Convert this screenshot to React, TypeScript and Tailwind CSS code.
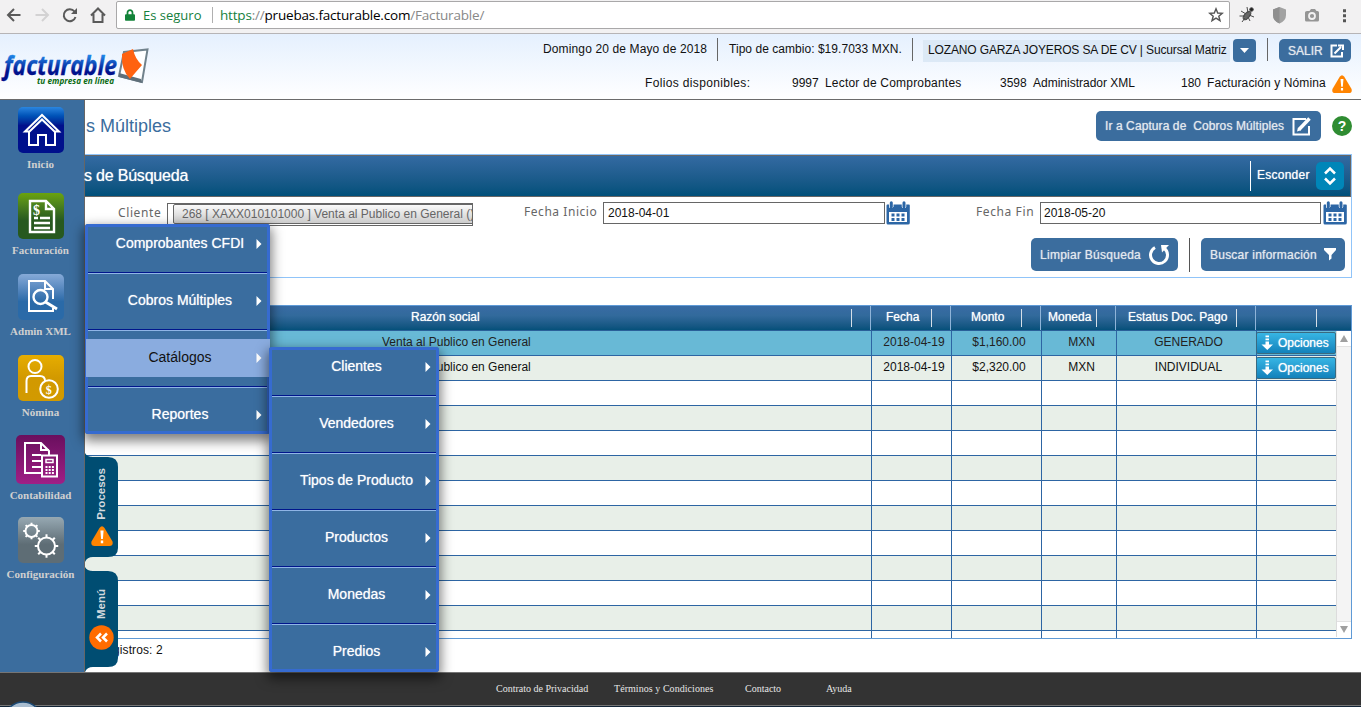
import React from "react";
import { FaLock } from "react-icons/fa";

const ARIAL = "font-['Liberation_Sans',Arial,sans-serif]";

function Arrow() {
  return (
    <svg width="6" height="12" viewBox="0 0 6 12">
      <path d="M0.5 1 L5.5 6 L0.5 11 Z" fill="#fff" />
    </svg>
  );
}

function Menu({ items, active, className }: { items: string[]; active?: string; className: string }) {
  return (
    <div className={"absolute z-20 rounded-[3px] bg-[#3a6d9f] pt-px text-[14px] shadow-[0_5px_12px_2px_rgba(0,0,0,0.5)] " + className}>
      <div className="pointer-events-none absolute inset-0 rounded-[3px] border-[3px] border-[#366bd0]" />
      {items.map((t, i) => (
        <div key={t} className="relative">
          {i > 0 && <div className="mx-[3px] mt-[9px] mb-2 h-[2px] border-b border-[#8fb5e6] bg-[#00168c]" />}
          <div
            className={
              "flex h-[38px] items-center " +
              (t === active
                ? "ml-px bg-[#8aacdf] pl-[18px] pr-[8px] text-[#111]"
                : "pl-[19px] pr-[8px] text-white [text-shadow:0_0_1px_rgba(255,255,255,0.7)]")
            }
          >
            <span className="grow pb-[2px] text-center leading-4">{t}</span>
            <Arrow />
          </div>
        </div>
      ))}
    </div>
  );
}

const side = [
  { label: "Inicio", tile: "h-[46px] w-[46px] from-[#2a86e0] via-[#00108c] via-40% to-[#00108c]", pos: "pt-[7px] h-[93px]" },
  { label: "Facturación", tile: "h-[46px] w-[46px] from-[#6aa30c] via-[#27591f] via-60% to-[#27591f]", pos: "h-[81px]" },
  { label: "Admin XML", tile: "h-[46px] w-[46px] from-[#86aad8] via-[#2a6aa8] via-60% to-[#2a6aa8]", pos: "h-[81px]" },
  { label: "Nómina", tile: "h-[46px] w-[46px] from-[#e6ad00] via-[#d29900] via-50% to-[#d29a00]", pos: "h-[80px]" },
  { label: "Contabilidad", tile: "h-[49px] w-[49px] -ml-px from-[#6a0f5e] to-[#a01f86]", pos: "h-[82px]" },
  { label: "Configuración", tile: "h-[46px] w-[46px] from-[#97a9b3] via-[#5e6d75] via-60% to-[#5e6d75]", pos: "h-[80px]" },
];

function Gear({ x, y, r }: { x: number; y: number; r: number }) {
  return (
    <g transform={`translate(${x} ${y})`}>
      <circle r={r} />
      {[0, 45, 90, 135, 180, 225, 270, 315].map((a) => (
        <line key={a} x1={r} x2={r + r * 0.38} y1="0" y2="0" transform={`rotate(${a})`} />
      ))}
    </g>
  );
}

function SideIcon({ name }: { name: string }) {
  return (
    <svg width="46" height="46" viewBox="0 0 46 46" fill="none" stroke="#fff" strokeWidth="2">
      {name === "Inicio" && <path d="M11 24 V38 H20 V28 H28 V38 H37 V24 M7 24.5 L24 8 L41 24.5 H36.500 L24 12.500 L11.500 24.5 Z" />}
      {name === "Facturación" && (
        <g>
          <path d="M12 8 H28 L36 16 V39 H12 Z M28 8 V16 H36" strokeWidth="2.400" />
          <path d="M16 25 H20 M22 25 H32 M16 30 H32 M16 35 H32" strokeWidth="2.400" />
          <text x="15" y="22" fill="#fff" stroke="none" fontSize="14" fontWeight="bold" fontFamily="Liberation Serif">$</text>
        </g>
      )}
      {name === "Admin XML" && (
        <g>
          <path d="M35 25 V15 L27 7 H11 V37 H35 V34 M27 7 V15 H35" />
          <circle cx="22.500" cy="23" r="7" strokeWidth="2.400" />
          <path d="M27.500 28 L39 35" strokeWidth="3" />
        </g>
      )}
      {name === "Nómina" && (
        <g>
          <circle cx="17" cy="11.500" r="6.500" />
          <path d="M8.500 38 V26 Q8.500 21 13 21 H22 Q27 21 27 26" />
          <circle cx="31" cy="34" r="8.800" />
          <text x="27.800" y="38.500" fill="#fff" stroke="none" fontSize="12" fontWeight="bold" fontFamily="Liberation Serif">$</text>
        </g>
      )}
      {name === "Contabilidad" && (
        <g>
          <path d="M24 36 H7 V6 H23 L31 14 V18 M23 6 V13 H31 M14 18 H23 M14 24 H23 M14 30 H23" />
          <rect x="24" y="18.500" width="15" height="21" />
          <rect x="28" y="22.500" width="7" height="3" strokeWidth="1.500" />
          <path d="M27.500 30 H36 M27.500 33 H36 M27.500 36 H36" strokeDasharray="2 1.200" />
        </g>
      )}
      {name === "Configuración" && (
        <g>
          <Gear x={13.5} y={14} r={6} />
          <Gear x={28.500} y={29} r={8.500} />
        </g>
      )}
    </svg>
  );
}

function Calendar() {
  return (
    <svg className="-mt-px" width="24" height="24" viewBox="0 0 24 24">
      <path d="M1 3.500 H3.300 V7 H7 V3.500 H16 V7 H20 V3.500 H23 Q23.800 3.500 23.800 4.500 V22 Q23.800 23.500 22 23.500 H2 Q0.500 23.500 0.500 22 V4.500 Z" fill="#2c66a5" />
      <path d="M5.300 0.500 V6 M18 0.500 V6" stroke="#fff" strokeWidth="4.500" />
      <path d="M5.300 1.800 V6 M18 1.800 V6" stroke="#2c66a5" strokeWidth="3" strokeLinecap="round" />
      <rect x="3" y="11" width="18" height="10" fill="#fff" />
      <path d="M5.500 14 H19 M5.500 18.500 H19" stroke="#2c66a5" strokeWidth="2.800" strokeDasharray="3 2" />
    </svg>
  );
}

function Warn({ w, h }: { w: number; h: number }) {
  return (
    <svg width={w} height={h} viewBox="0 0 22 20" preserveAspectRatio="none">
      <path d="M8.500 2 Q11 -1.500 13.500 2 L21.500 15.500 Q22.500 20 18.500 20 H3.500 Q-0.500 20 0.500 15.500 Z" fill="#ff8400" />
      <path d="M9.400 4.500 H12.600 L11.900 13 H10.100 Z M9.800 14.500 H12.200 V17.300 H9.800 Z" fill="#fff" />
    </svg>
  );
}

function Tab({ label, h, className, children }: { label: string; h: number; className: string; children: React.ReactNode }) {
  return (
    <div className={"absolute left-[85px] z-10 w-[33px] " + className}>
      <svg className="absolute inset-0" width="33" height={h}>
        <path d={`M0 0 Q2 4 8 4 H23 Q33 4 33 14 V${h - 14} Q33 ${h - 5} 23 ${h - 5} H8 Q2 ${h - 5} 0 ${h} Z`} fill="#004d72" />
      </svg>
      <div className="relative flex flex-col items-center">
        <span className="mr-[2px] rotate-180 text-[11.500px] leading-4 font-bold text-[#d3d9de] [writing-mode:vertical-rl]">{label}</span>
        {children}
      </div>
    </div>
  );
}

const rows = [
  ["Venta al Publico en General", "2018-04-19", "$1,160.00", "MXN", "GENERADO"],
  ["Venta al Publico en General", "2018-04-19", "$2,320.00", "MXN", "INDIVIDUAL"],
  ...Array.from({ length: 10 }, () => ["", "", "", "", ""]),
];

const heads = ["Razón social", "Fecha", "Monto", "Moneda", "Estatus Doc. Pago", ""];
const headPad = ["pl-[326px]", "pl-[15px]", "pl-[20px]", "pl-[7px]", "pl-[12px]", ""];
const headWidth = ["w-[786px]", "w-[80px]", "w-[90px]", "w-[75px]", "w-[140px]", "w-[80px]"];
const btn = "flex items-center rounded-[5px] bg-[#3b6d9e] text-[12px] text-[#e3e8ee] [text-shadow:0_0_1px_rgba(227,232,238,0.8)]";

export default function App() {
  return (
    <div className={"relative flex h-[707px] w-[1361px] flex-col overflow-hidden bg-white text-[12px] text-[#111] " + ARIAL}>
      {/* browser toolbar */}
      <div className="flex h-[34px] shrink-0 items-start border-b border-[#b6b4b6] bg-[#f2f1f2] font-['Open_Sans','Noto_Sans',sans-serif]">
        <svg width="116" height="30" viewBox="0 0 116 30" fill="none" stroke="#5a5a5a" strokeWidth="2">
          <path d="M20.500 15 H8 M14 9 L8 15 L14 21" />
          <path d="M35.500 15 H48 M42 9 L48 15 L42 21" stroke="#d3d2d3" />
          <path d="M74.500 11.500 A6 6 0 1 0 75.500 17" />
          <path d="M77 8 V14 H71 Z" fill="#5a5a5a" stroke="none" />
          <path d="M91 15.500 L98 8.500 L105 15.500 M93.500 14 V22 H102.500 V14" />
        </svg>
        <div className="mt-px flex h-[28px] w-[1114px] items-center rounded-[2px] border border-[#a9a8a9] bg-white pl-[8px]">
          <FaLock className="h-[12px] w-[10px] text-[#128339]" />
          <span className="ml-[8px] w-[69px] text-[13px] leading-5 whitespace-nowrap text-[#15803d]">Es seguro</span>
          <span className="h-4 w-[8px] border-l border-[#b0b0b0]" />
          <span className="text-[13.500px] leading-5 tracking-[-0.190px] whitespace-nowrap text-[#888]">
            <span className="text-[#15803d]">https</span>://<span className="text-black">pruebas.facturable.com</span>/Facturable/
          </span>
          <svg className="mr-[5px] ml-auto" width="16" height="16" viewBox="0 0 16 16" fill="none" stroke="#555" strokeWidth="1.400">
            <path d="M8 1.800 L9.700 6 L14.300 6.300 L10.800 9.200 L12 13.700 L8 11.200 L4 13.700 L5.200 9.200 L1.700 6.300 L6.300 6 Z" />
          </svg>
        </div>
        <svg width="131" height="30" viewBox="0 0 131 30">
          <g stroke="#4a4a4a" fill="#666">
            <ellipse cx="17" cy="15.500" rx="2.500" ry="5" transform="rotate(40 17 15.500)" />
            <path d="M11 11 L16 14 M9.500 16 L15 16 M12 22 L15 18 M17 7 L18 13 M24 17 L19 15 M20 21 L18 17" fill="none" />
            <circle cx="21.500" cy="9.500" r="1.800" fill="#222" />
          </g>
          <path d="M49.500 7 L56 9.500 V15 Q56 21 49.500 23.500 Q43 21 43 15 V9.500 Z" fill="#a2a2a2" />
          <path d="M49.500 7 V23.500 Q43 21 43 15 V9.500 Z" fill="#8f8f8f" />
          <path d="M77 11 H79.500 L81 9 H85 L86.500 11 H87.500 Q89 11 89 12.500 V20 Q89 21.500 87.500 21.500 H76.500 Q75 21.500 75 20 V12.500 Q75 11 77 11 Z" fill="#959595" />
          <circle cx="82" cy="16" r="3" fill="#959595" stroke="#f2f1f2" strokeWidth="1.800" />
          <path d="M113 9.300 h3 v3 h-3 Z M113 14.300 h3 v3 h-3 Z M113 19.300 h3 v3 h-3 Z" fill="#555" />
        </svg>
      </div>

      {/* site header */}
      <header className="flex h-[66px] shrink-0 border-b border-[#6b6b6b] bg-gradient-to-b from-[#e5f0fe] to-white whitespace-nowrap">
        <svg width="543" height="65" viewBox="0 34 543 65">
          <defs>
            <linearGradient id="lg" x1="0" y1="0" x2="0" y2="1">
              <stop offset="0.250" stopColor="#1f86e8" />
              <stop offset="0.700" stopColor="#00128c" />
            </linearGradient>
          </defs>
          <path d="M124 52 L147.500 49.500 L142 82 L119 76 Z" fill="#fff" stroke="#71828c" strokeWidth="2" />
          <path d="M119 73 L141 79 L142 83 L119 77 Z" fill="#5f6f79" />
          <path d="M122 54 L133 49 Q135 59 142 65 Q135 73 130 79 Q121 70 122 54 Z" fill="#ff6210" />
          <text x="4" y="75" textLength="113" lengthAdjust="spacingAndGlyphs" fontFamily="Open Sans, Noto Sans" fontSize="27" fontWeight="bold" fontStyle="italic" fill="url(#lg)" stroke="url(#lg)" strokeWidth="0.300">facturable</text>
          <text x="37" y="84" textLength="77" lengthAdjust="spacingAndGlyphs" fontFamily="Open Sans, Noto Sans" fontSize="9" fontWeight="bold" fontStyle="italic" fill="#0a6b12">tu empresa en línea</text>
        </svg>
        <div className="flex grow flex-col">
          <div className="flex h-[32px] pt-[4px] leading-[22px]">
            <span className="w-[174px] tracking-[0.130px]">Domingo 20 de Mayo de 2018</span>
            <span className="h-[23px] w-3 border-l border-[#666]" />
            <span className="w-[183px] tracking-[0.040px]">Tipo de cambio: $19.7033 MXN.</span>
            <span className="h-[23px] w-[11px] border-l border-[#666]" />
            <span className="mt-[2px] h-[22px] w-[307px] bg-[#dce9f6] pl-[5px] leading-[20px] tracking-[-0.140px]">LOZANO GARZA JOYEROS SA DE CV | Sucursal Matriz</span>
            <span className="mt-px ml-[3px] flex h-[23px] w-[23px] items-center justify-center rounded-[4px] bg-[#3b6d9e]">
              <svg width="9" height="5"><path d="M0 0 H9 L4.500 5 Z" fill="#fff" /></svg>
            </span>
            <span className="ml-[11px] h-[23px] w-[12px] border-l border-[#666]" />
            <span className={btn + " mt-px h-[23px] w-[72px] gap-[7px] pl-[9px]"}>
              SALIR
              <svg width="14" height="14" viewBox="0 0 14 14" fill="none" stroke="#fff" strokeWidth="2">
                <path d="M7 1.500 H1.500 V12.500 H12 V8 M4.500 9.500 L11 3 M8 1.500 H13 V6" />
              </svg>
            </span>
          </div>
          <div className="flex pt-[5px] leading-[24px]">
            <span className="ml-[102px] w-[147px] tracking-[0.350px]">Folios disponibles:</span>
            <span className="w-[33px]">9997</span>
            <span className="w-[175px] tracking-[0.200px]">Lector de Comprobantes</span>
            <span className="w-[33px]">3598</span>
            <span className="w-[148px]">Administrador XML</span>
            <span className="w-[26px]">180</span>
            <span className="w-[125px] tracking-[0.100px]">Facturación y Nómina</span>
            <span className="mt-[4px]"><Warn w={20} h={18} /></span>
          </div>
        </div>
      </header>

      <div className="flex h-[572px] shrink-0">
        {/* sidebar */}
        <nav className="flex w-[85px] shrink-0 flex-col border-r border-[#666] bg-[#3b6d9e]">
          {side.map((s) => (
            <div key={s.label} className={"flex shrink-0 flex-col items-center pr-[2px] " + s.pos}>
              <div className={"flex shrink-0 items-center justify-center rounded-[5px] bg-gradient-to-b " + s.tile}>
                <SideIcon name={s.label} />
              </div>
              <span className="pt-[3px] pr-px font-['Liberation_Serif',serif] text-[11px] leading-4 font-bold text-[#d0d0d0]">{s.label}</span>
            </div>
          ))}
        </nav>

        {/* content */}
        <main className="flex w-[1276px] flex-col">
          <div className="flex h-[54px] items-start whitespace-nowrap">
            <h1 className="mt-[15px] ml-px text-[18px] leading-[22px] text-[#3b6d9e]">s Múltiples</h1>
            <div className={btn + " mt-[11px] ml-auto h-[30px] w-[225px] pl-[9px]"}>
              <span className="w-[187px] tracking-[0.090px] whitespace-pre">Ir a Captura de  Cobros Múltiples</span>
              <svg width="20" height="20" viewBox="0 0 20 20" fill="none" stroke="#fff" strokeWidth="2">
                <path d="M14 3 H1.500 V18.500 H17 V10" />
                <path d="M7 13.500 L17.500 2.500" strokeWidth="3.500" />
                <path d="M5 15.500 L6 11.500 L9 14.300 Z" fill="#fff" stroke="none" />
              </svg>
            </div>
            <span className="mt-[16px] mr-[9px] ml-[11px] flex h-[20px] w-[20px] items-center justify-center rounded-full bg-[#2f8c32] text-[14px] font-bold text-white">?</span>
          </div>

          <section className="flex h-[124px] w-[1267px] shrink-0 flex-col border-t border-r border-b border-[#90c4f9]">
            <div className="flex h-[42px] items-start border-t border-r border-b border-[#666] bg-gradient-to-b from-[#336aa2] to-[#00507a] text-white">
              <h2 className="mt-[10px] -ml-px text-[16px] leading-5 tracking-[-0.200px] [text-shadow:0_0_1px_rgba(255,255,255,0.700)]">s de Búsqueda</h2>
              <span className="mt-[5px] ml-auto h-[30px] w-[7px] border-l border-white" />
              <span className="mt-[10px] w-[59px] text-[12px] leading-[18px] tracking-[0.250px] [text-shadow:0_0_1px_rgba(255,255,255,0.800)]">Esconder</span>
              <span className="mt-[6px] mr-[6px] flex h-[28px] w-[28px] items-center justify-center rounded-[5px] bg-[#0086b8]">
                <svg width="12" height="20" viewBox="0 0 12 20" fill="none" stroke="#fff" strokeWidth="2.500">
                  <path d="M1 7.500 L6 2.500 L11 7.500 M1 12.500 L6 17.500 L11 12.500" />
                </svg>
              </span>
            </div>
            <div className="flex h-[34px] items-start pt-[5px] pl-[33px] whitespace-nowrap">
              <span className="w-[49px] pt-[3px] font-['Noto_Sans',sans-serif] text-[12px] leading-4 tracking-[0.600px] text-[#666]">Cliente</span>
              <div className="mt-px h-[23px] w-[306px] overflow-hidden border border-[#666] pl-[5px]">
                <div className="h-[20px] w-[310px] rounded-[2px] border border-[#666] bg-gradient-to-b from-[#fafafa] to-[#ccc] pl-[8px] text-[12px] leading-[19px] text-[#666]">
                  268 [ XAXX010101000 ] Venta al Publico en General ()
                </div>
              </div>
              <span className="ml-[51px] w-[79px] pt-[2px] font-['Noto_Sans',sans-serif] text-[12px] leading-4 tracking-[0.550px] text-[#666]">Fecha Inicio</span>
              <div className="h-[22px] w-[282px] border border-[#666] pl-[4px] leading-[20px]">2018-04-01</div>
              <div className="w-[91px] pl-[1px]"><Calendar /></div>
              <span className="w-[64px] pt-[2px] font-['Noto_Sans',sans-serif] text-[12px] leading-4 tracking-[0.600px] text-[#666]">Fecha Fin</span>
              <div className="h-[22px] w-[281px] border border-[#666] pl-[3px] leading-[20px]">2018-05-20</div>
              <div className="pl-[2px]"><Calendar /></div>
            </div>
            <div className="flex justify-end pt-[7px] pr-[6px] whitespace-nowrap">
              <div className={btn + " h-[33px] w-[147px] pl-[9px]"}>
                <span className="w-[108px] tracking-[0.270px]">Limpiar Búsqueda</span>
                <svg width="22" height="22" viewBox="0 0 22 22" fill="none" stroke="#fff" strokeWidth="3">
                  <path d="M7 3.500 A8.500 8.500 0 1 0 16.500 4.500" />
                  <path d="M13 1 H21 L14 8.500 Z" fill="#fff" stroke="none" />
                </svg>
              </div>
              <span className="ml-[11px] h-[34px] w-[12px] border-l border-[#555]" />
              <div className={btn + " h-[33px] w-[144px] pl-[9px]"}>
                <span className="w-[114px] tracking-[0.230px]">Buscar información</span>
                <svg width="12" height="13"><path d="M0 0 H12 V2 L7.500 7 V10.500 L5 12.500 V7 L0 2 Z" fill="#fff" /></svg>
              </div>
            </div>
          </section>

          <section className="mt-[27px] h-[334px] w-[1267px] shrink-0 overflow-hidden border-t border-r border-b border-[#5f9ad6]">
            <div className="flex h-[25px] border-b border-[#2a6099] bg-gradient-to-b from-[#386ba4] via-[#326a9c] via-40% to-[#04507a] text-[12px] whitespace-nowrap text-white">
              {heads.map((h, i) => (
                <div
                  key={i}
                  className={
                    "flex shrink-0 items-start " + headPad[i] + " " + headWidth[i] + (i < 5 ? " border-r border-[#8fb4d8]" : "")
                  }
                >
                  <span className="pt-[2px] leading-[18px] [text-shadow:0_0_1px_rgba(255,255,255,0.800)]">{h}</span>
                  <span className={"mt-[3px] ml-auto h-[18px] w-px bg-[#d5dfe8] " + (i < 5 ? "mr-[18px]" : "mr-[19px]")} />
                </div>
              ))}
            </div>
            <div className="flex">
              <div className="w-[1251px] shrink-0">
                {rows.map((r, i) => (
                  <div
                    key={i}
                    className={
                      "flex h-[25px] border-b border-[#2d65a3] text-center leading-[23px] whitespace-nowrap " +
                      (i === 0 ? "bg-[#68b9d6] text-[#222]" : i % 2 ? "bg-[#e8efe8]" : "bg-white")
                    }
                  >
                    <div className="w-[787px] shrink-0 border-r border-[#2d65a3] pl-[297px] text-left">{r[0]}</div>
                    <div className="w-[80px] shrink-0 border-r border-[#2d65a3] pl-[5px]">{r[1]}</div>
                    <div className="w-[90px] shrink-0 border-r border-[#2d65a3] pl-[5px]">{r[2]}</div>
                    <div className="w-[75px] shrink-0 border-r border-[#2d65a3] pl-[5px]">{r[3]}</div>
                    <div className="w-[140px] shrink-0 border-r border-[#2d65a3] pl-[4px]">{r[4]}</div>
                    <div className="w-[79px] shrink-0">
                      {i < 2 && (
                        <div className="-ml-px mt-px flex h-[22px] w-[80px] items-center rounded-[2px] border border-[#3a6a80] bg-gradient-to-b from-[#37b5e4] to-[#1282bb] pl-[4px] text-white [text-shadow:0_0_1px_rgba(255,255,255,0.800)]">
                          <svg width="17" height="16" viewBox="0 0 17 16">
                            <path d="M4.500 0.500 H8 V2.300 H4.500 Z M4.500 3.500 H8 V5.300 H4.500 Z M4.500 6.500 H8 V9.500 H12 L6.250 15 L0.500 9.500 H4.500 Z" fill="#fff" />
                          </svg>
                          Opciones
                        </div>
                      )}
                    </div>
                  </div>
                ))}
                <div className="flex h-[8px]">
                  <div className="w-[787px] border-r border-[#2d65a3]" />
                  <div className="w-[80px] border-r border-[#2d65a3]" />
                  <div className="w-[90px] border-r border-[#2d65a3]" />
                  <div className="w-[75px] border-r border-[#2d65a3]" />
                  <div className="w-[140px] border-r border-[#2d65a3]" />
                </div>
              </div>
              <div className="flex h-[306px] grow flex-col items-center justify-between border-l border-[#dcdcdc] bg-[#f4f4f4]">
                <div className="flex h-[16px] w-full items-center justify-center border-b border-[#e2e2e2] bg-white">
                  <svg width="8" height="7"><path d="M0 7 L4 0 L8 7 Z" fill="#a0a0a0" /></svg>
                </div>
                <div className="flex h-[16px] w-full items-center justify-center border-t border-[#e2e2e2] bg-white">
                  <svg width="8" height="7"><path d="M0 0 L4 7 L8 0 Z" fill="#a0a0a0" /></svg>
                </div>
              </div>
            </div>
          </section>
          <div className="mt-[2px] pl-[28px] leading-[18px] tracking-[0.100px]">gistros: 2</div>
        </main>
      </div>

      {/* footer */}
      <footer className="flex h-[34px] shrink-0 border-t border-b border-[#757575] bg-[#333] pl-[496px] font-['Liberation_Serif',serif] text-[10px] leading-[32px] text-[#e6e6e6]">
        <span className="w-[118px]">Contrato de Privacidad</span>
        <span className="w-[131px] tracking-[0.050px]">Términos y Condiciones</span>
        <span className="w-[81px]">Contacto</span>
        <span>Ayuda</span>
      </footer>
      <div className="h-px bg-[#122436]" />
      <svg className="absolute bottom-0 left-[6px]" width="36" height="6">
        <circle cx="17" cy="20" r="19" fill="#a9bdd0" stroke="#1c4a75" strokeWidth="1.500" />
      </svg>

      <Tab label="Procesos" h={109} className="top-[453px] h-[109px] pt-[15px]">
        <span className="mt-[6px]"><Warn w={22} h={20} /></span>
      </Tab>
      <Tab label="Menú" h={105} className="top-[567px] h-[105px] pt-[22px]">
        <svg className="mt-[6px]" width="25" height="25" viewBox="0 0 25 25" fill="none" stroke="#fff" strokeWidth="2.500">
          <circle cx="12.500" cy="12.500" r="12.200" fill="#ff6c00" stroke="none" />
          <path d="M12 8.500 L8 12.500 L12 16.500 M18 8.500 L14 12.500 L18 16.500" />
        </svg>
      </Tab>

      <Menu className="top-[224px] left-[85px] h-[210px] w-[185px]" items={["Comprobantes CFDI", "Cobros Múltiples", "Catálogos", "Reportes"]} active="Catálogos" />
      <Menu className="top-[347px] left-[269px] h-[325px] w-[170px]" items={["Clientes", "Vendedores", "Tipos de Producto", "Productos", "Monedas", "Predios"]} />
    </div>
  );
}
